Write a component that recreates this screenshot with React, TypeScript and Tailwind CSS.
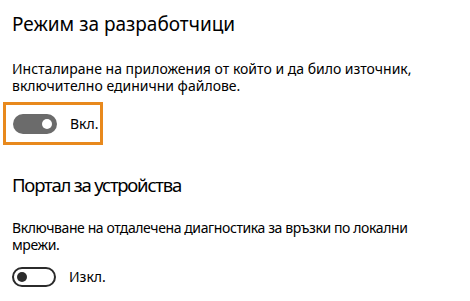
import React from "react";

function Toggle({ on }: { on: boolean }) {
  if (on) {
    return (
      <div className="flex h-[20px] w-[44px] items-center justify-end rounded-full bg-[#6b6b6b] pr-[5px]">
        <div className="h-[10px] w-[10px] rounded-full bg-white" />
      </div>
    );
  }
  return (
    <div className="flex h-[20px] w-[44px] items-center rounded-full border-2 border-[#2b2b2b] pl-[3px]">
      <div className="h-[10px] w-[10px] rounded-full bg-[#2b2b2b]" />
    </div>
  );
}

export default function App() {
  return (
    <div
      className="h-[301px] w-[470px] overflow-hidden bg-white px-3 pt-[10px] text-black"
      style={{ fontFamily: '"Noto Sans", "Open Sans", sans-serif' }}
    >
      {/* Developer mode */}
      <h2 className="text-[19px] leading-[28px] font-normal">Режим за разработчици</h2>
      <p className="mt-[22px] text-[14px] leading-[17px]">
        Инсталиране на приложения от който и да било източник,
        <br />
        включително единични файлове.
      </p>
      <div className="-ml-[9px] mt-[8px] flex h-[43px] w-[100px] items-center border-[3px] border-[#e8891d] pl-[7px]">
        <Toggle on />
        <span className="ml-[13px] text-[14px]">Вкл.</span>
      </div>

      {/* Device portal */}
      <h2 className="mt-[26px] text-[18.5px] leading-[28px] font-normal tracking-[-1.2px]">Портал за устройства</h2>
      <p className="mt-[20px] text-[14px] leading-[17px] tracking-[-0.4px]">
        Включване на отдалечена диагностика за връзки по локални
        <br />
        мрежи.
      </p>
      <div className="mt-[13px] flex items-center">
        <Toggle on={false} />
        <span className="ml-[13px] text-[14px]">Изкл.</span>
      </div>
    </div>
  );
}
